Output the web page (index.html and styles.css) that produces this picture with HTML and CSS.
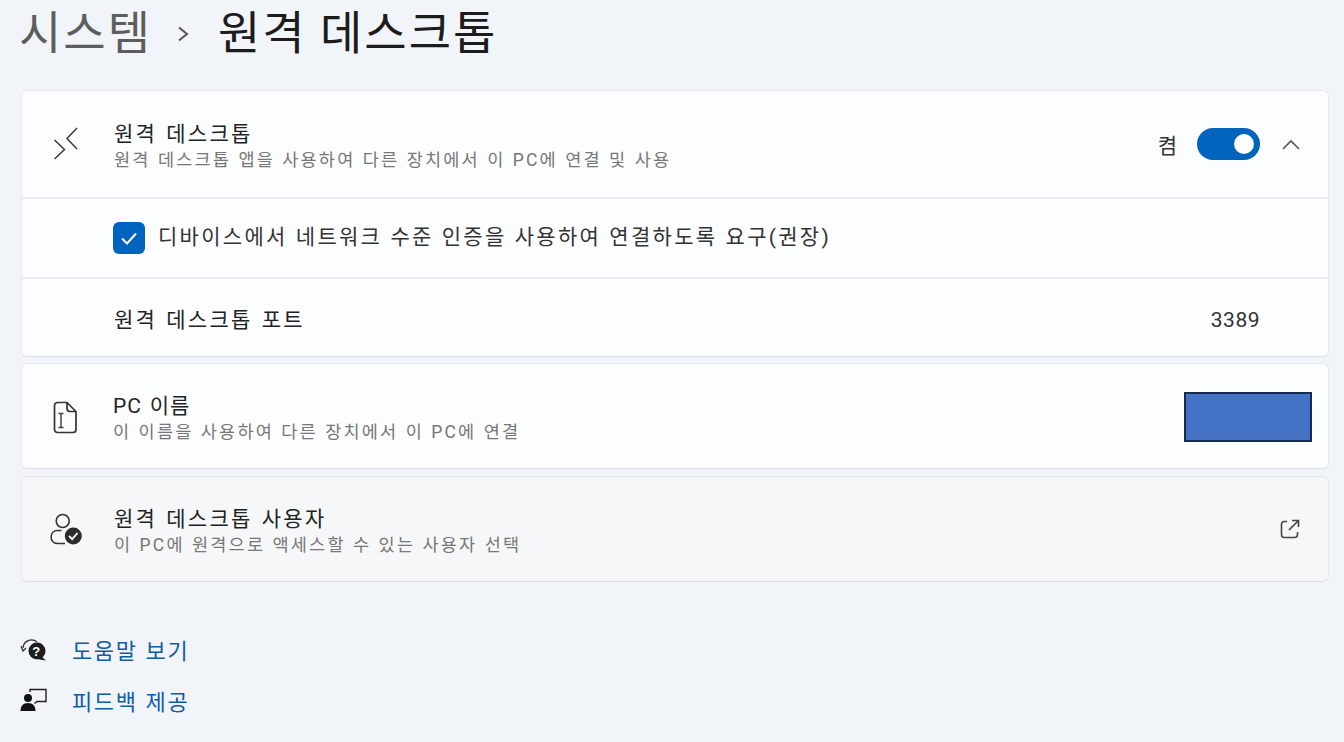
FILE: index.html
```html
<!DOCTYPE html>
<html lang="ko">
<head>
<meta charset="utf-8">
<title>원격 데스크톱</title>
<link rel="stylesheet" href="styles.css">
</head>
<body>
<header class="crumbs">
  <span class="crumb-parent">시스템</span>
  <svg class="crumb-sep" width="14" height="18" viewBox="0 0 14 18"><path d="M2 2.500l8 6.500-8 6.500" fill="none" stroke="#555" stroke-width="2"/></svg>
  <span class="crumb-current">원격 데스크톱</span>
</header>
<main class="cards">
  <section class="card card-first">
    <div class="row row-head">
      <svg class="row-icon" width="28" height="36" viewBox="0 0 28 36"><path d="M2.500 14l10 9.500-10 9.500M25 2l-10 10.500 10 10.500" fill="none" stroke="#3a3a3a" stroke-width="1.500"/></svg>
      <div class="row-text">
        <div class="row-title">원격 데스크톱</div>
        <div class="row-sub">원격 데스크톱 앱을 사용하여 다른 장치에서 이 PC에 연결 및 사용</div>
      </div>
      <span class="toggle-label">켬</span>
      <span class="toggle"><span class="toggle-knob"></span></span>
      <svg class="chevron" width="18" height="11" viewBox="0 0 18 11"><path d="M1 10l8-8 8 8" fill="none" stroke="#555" stroke-width="1.600"/></svg>
    </div>
    <div class="row row-check">
      <span class="checkbox"><svg width="22" height="22" viewBox="0 0 22 22"><path d="M4 11.500l5 5 9-10" fill="none" stroke="#fff" stroke-width="2"/></svg></span>
      <span class="check-label">디바이스에서 네트워크 수준 인증을 사용하여 연결하도록 요구(권장)</span>
    </div>
    <div class="row row-port">
      <span class="row-title port-title">원격 데스크톱 포트</span>
      <span class="port">3389</span>
    </div>
  </section>
  <section class="card card-single">
    <div class="row row-item">
      <svg class="row-icon" width="28" height="36" viewBox="0 0 28 36"><path d="M7.500 4.500h9.500l9 9v18a3 3 0 0 1-3 3h-15.500a3 3 0 0 1-3-3v-24a3 3 0 0 1 3-3zM17 4.500v6a3 3 0 0 0 3 3h6" fill="none" stroke="#333" stroke-width="1.700"/><path d="M8.500 15.500h5M11 15.500v14M8.500 29.500h5" fill="none" stroke="#444" stroke-width="1.500"/></svg>
      <div class="row-text">
        <div class="row-title row-title-latin">PC 이름</div>
        <div class="row-sub">이 이름을 사용하여 다른 장치에서 이 PC에 연결</div>
      </div>
      <span class="redaction"></span>
    </div>
  </section>
  <section class="card card-single card-muted">
    <div class="row row-item">
      <svg class="row-icon" width="34" height="36" viewBox="0 0 34 36"><circle cx="12.700" cy="10" r="6.500" fill="none" stroke="#333" stroke-width="1.600"/><path d="M15 32.500h-7.500c-8.500 0-8.500-13 0-13h4" fill="none" stroke="#333" stroke-width="1.600"/><circle cx="23.300" cy="25" r="8.500" fill="#2b2b2b"/><path d="M19 25l3.200 3.200 5.300-6.200" fill="none" stroke="#fff" stroke-width="1.800"/></svg>
      <div class="row-text">
        <div class="row-title">원격 데스크톱 사용자</div>
        <div class="row-sub">이 PC에 원격으로 액세스할 수 있는 사용자 선택</div>
      </div>
      <svg class="external" width="22" height="22" viewBox="0 0 22 22"><path d="M8 3.500h-2.500a3 3 0 0 0-3 3v10a3 3 0 0 0 3 3h10a3 3 0 0 0 3-3v-2.500M10 12l9-9M13 2.500h6.500v6.500" fill="none" stroke="#444" stroke-width="1.600"/></svg>
    </div>
  </section>
</main>
<nav class="links">
  <a class="link">
    <svg width="28" height="28" viewBox="0 0 28 28"><path d="M4 13a8.500 8.500 0 0 1 14-6" fill="none" stroke="#333" stroke-width="1.300"/><path d="M2 11l2 5 3-3" fill="none" stroke="#333" stroke-width="1.300"/><circle cx="18" cy="16" r="8.500" fill="#1d1d1d"/><path d="M22 21l5 4.500-7-1z" fill="#1d1d1d"/><text x="18" y="20.500" class="link-q">?</text></svg>
    <span>도움말 보기</span>
  </a>
  <a class="link">
    <svg width="28" height="28" viewBox="0 0 28 28"><path d="M11 6V3.500h16v12h-9l-2.500 2" fill="none" stroke="#222" stroke-width="1.400"/><circle cx="9" cy="12" r="4" fill="#111"/><path d="M1.500 25c0-5 2.500-8 7.500-8s7.500 3 7.500 8z" fill="#111"/></svg>
    <span>피드백 제공</span>
  </a>
</nav>
</body>
</html>
```
FILE: styles.css
```css
* { box-sizing: border-box; }
html, body { margin: 0; height: 742px; overflow: hidden; }
body {
  background: #f1f4f8;
  font-family: Roboto, "Noto Sans CJK KR", sans-serif;
  color: #222;
  padding: 0 15px 0 21px;
}
.crumbs {
  height: 90px;
  display: flex;
  align-items: flex-start;
  padding-top: 3px;
  font-size: 46px;
  line-height: 60px;
  letter-spacing: 2px;
  white-space: nowrap;
}
.crumb-parent { color: #5d5d5d; width: 158px; margin-left: -2px; }
.crumb-sep { margin: 22px 27px 0 0; flex: none; }
.crumb-current { color: #1c1c1c; }
.cards { display: flex; flex-direction: column; gap: 7px; }
.card {
  background: #fcfdfe;
  border: 1px solid #e6e9ec;
  border-bottom-color: #dcdfe2;
  border-radius: 6px;
  width: 1308px;
}
.card-first { margin-bottom: -1px; }
.card-muted { background: #f6f7f9; }
.row { display: flex; align-items: center; padding-right: 28px; }
.row + .row { border-top: 2px solid #ebeef0; }
.row-head { height: 106px; padding-left: 30px; }
.row-check { height: 80px; padding-left: 91px; }
.row-port { height: 79px; padding-left: 92px; justify-content: space-between; padding-right: 68px; }
.row-item { height: 104px; padding-left: 28px; }
.row-icon { flex: none; margin-right: 34px; }
.row-item .row-icon { margin-right: 35px; }
.card-muted .row-item .row-icon { margin-right: 30px; }
.row-text { flex: 1; padding-top: 6px; }
.row-title { font-size: 21px; line-height: 26px; color: #222; letter-spacing: 2.300px; word-spacing: 1.500px; }
.port-title { padding-top: 4px; }
.row-title-latin { letter-spacing: 1px; }
.row-sub { font-size: 17.500px; line-height: 26px; color: #777; letter-spacing: 2.200px; word-spacing: 0.750px; }
.toggle-label { font-size: 21px; color: #333; margin-right: 20px; }
.toggle {
  width: 63px; height: 32px; border-radius: 16px; background: #0063bd;
  display: flex; align-items: center; justify-content: flex-end; padding-right: 6px;
  margin-right: 22px;
}
.toggle-knob { width: 20px; height: 20px; border-radius: 50%; background: #fff; }
.checkbox {
  width: 32px; height: 32px; border-radius: 6px; background: #0063bd;
  display: flex; align-items: center; justify-content: center; margin-right: 13px;
}
.check-label { font-size: 21px; line-height: 26px; color: #333; letter-spacing: 2.280px; word-spacing: 0.700px; padding-bottom: 2px; }
.port { font-size: 21px; color: #333; letter-spacing: 0.500px; padding-top: 4px; }
.redaction { width: 128px; height: 50px; background: #4472c4; border: 2px solid #172c51; margin: 2px -12px 0 0; }
.external { margin-right: -1px; }
.links { display: flex; flex-direction: column; gap: 23px; margin-top: 53px; margin-left: -2px; }
.link { display: flex; align-items: center; gap: 25px; height: 28px; color: #0f5ca8; font-size: 22px; letter-spacing: 1.600px; word-spacing: 1px; }
.link-q { fill: #fff; font-size: 13px; font-weight: 700; text-anchor: middle; font-family: "Liberation Sans", sans-serif; }
```
